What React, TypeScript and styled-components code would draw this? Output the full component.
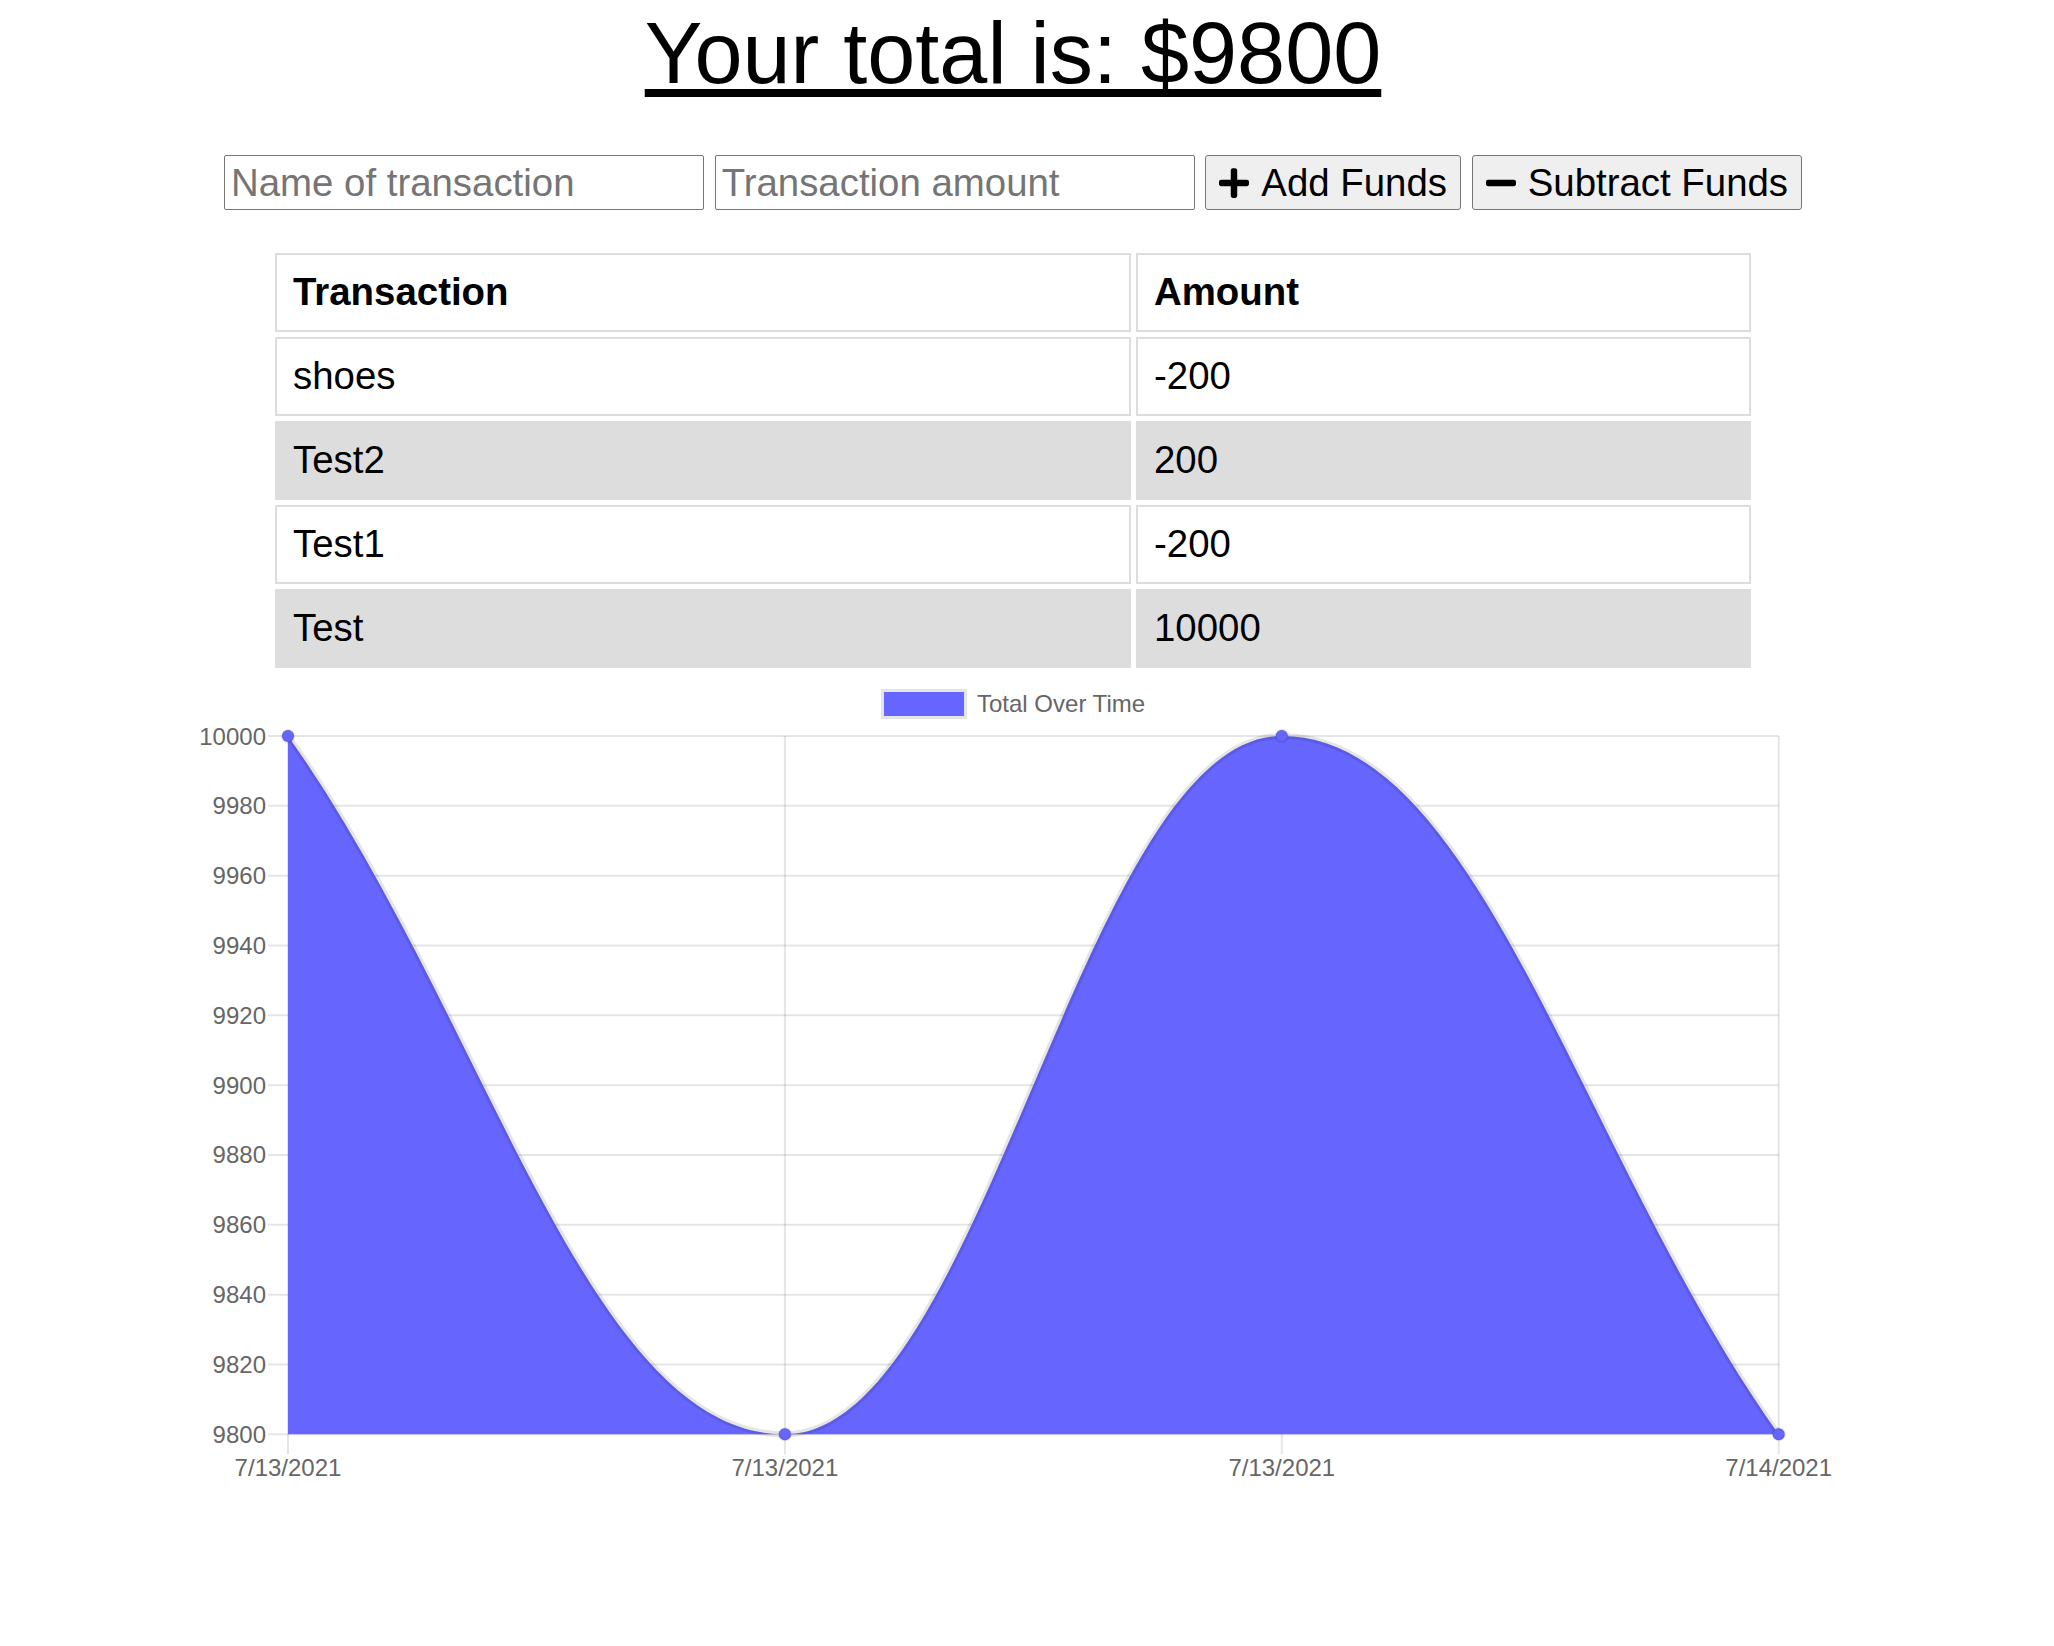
import React from "react";
import styled, { createGlobalStyle } from "styled-components";

const GlobalStyle = createGlobalStyle`
  html, body { margin: 0; padding: 0; background: #fff; }
  body { font-family: "Liberation Sans", Arial, Helvetica, sans-serif; color: #000; }
`;

const FONT = `"Liberation Sans", Arial, Helvetica, sans-serif`;

const Page = styled.main`
  display: flex;
  flex-direction: column;
  align-items: center;
  padding-right: 28px;
`;

const Title = styled.h1`
  margin: 0;
  font-size: 86.4px;
  line-height: 107px;
  font-weight: 400;
  text-decoration: underline;
  text-decoration-thickness: 8px;
  text-underline-offset: 5.5px;
`;

const Controls = styled.form`
  display: flex;
  gap: 10.7px;
  margin-top: 48px;
`;

const TextInput = styled.input`
  box-sizing: border-box;
  width: 480px;
  height: 55px;
  padding: 0 6px;
  font: 38.4px ${FONT};
  color: #000;
  background: #fff;
  border: 1px solid #767676;
  border-radius: 2px;
  &::placeholder { color: #757575; }
`;

const ActionButton = styled.button`
  box-sizing: border-box;
  height: 55px;
  display: inline-flex;
  align-items: center;
  gap: 12px;
  padding: 0 13px;
  font: 38.4px ${FONT};
  color: #000;
  background: #efefef;
  border: 1px solid #767676;
  border-radius: 3px;
`;

const Glyph = styled.svg`
  width: 30px;
  height: 34px;
  flex: none;
`;

const PlusIcon = () => (
  <Glyph viewBox="0 0 448 512" preserveAspectRatio="none">
    <path
      fill="currentColor"
      d="M416 208H272V64c0-17.670-14.330-32-32-32h-32c-17.670 0-32 14.330-32 32v144H32c-17.670 0-32 14.330-32 32v32c0 17.670 14.330 32 32 32h144v144c0 17.670 14.330 32 32 32h32c17.670 0 32-14.330 32-32V304h144c17.670 0 32-14.330 32-32v-32c0-17.670-14.330-32-32-32z"
    />
  </Glyph>
);

const MinusIcon = () => (
  <Glyph viewBox="0 0 448 512" preserveAspectRatio="none">
    <path
      fill="currentColor"
      d="M416 208H32c-17.670 0-32 14.330-32 32v32c0 17.670 14.330 32 32 32h384c17.670 0 32-14.330 32-32v-32c0-17.670-14.330-32-32-32z"
    />
  </Glyph>
);

const Ledger = styled.table`
  margin-top: 38px;
  width: 1486px;
  table-layout: fixed;
  border-collapse: separate;
  border-spacing: 5px;
  font-size: 38.4px;
`;

const HeadCell = styled.th<{ $wide?: boolean }>`
  box-sizing: border-box;
  width: ${(p) => (p.$wide ? "856px" : "auto")};
  padding: 15px 16px 17px;
  line-height: 43px;
  border: 2px solid #ddd;
  background: #fff;
  text-align: left;
  font-weight: 700;
`;

const Cell = styled.td<{ $shade?: boolean }>`
  padding: 15px 16px 17px;
  line-height: 43px;
  border: 2px solid #ddd;
  background: ${(p) => (p.$shade ? "#ddd" : "#fff")};
  text-align: left;
`;

const ChartFrame = styled.svg`
  display: block;
  width: 1680px;
  height: 848px;
  font-family: ${FONT};
`;

const transactions = [
  { name: "shoes", value: -200 },
  { name: "Test2", value: 200 },
  { name: "Test1", value: -200 },
  { name: "Test", value: 10000 },
];

const series = [10000, 9800, 10000, 9800];
const labels = ["7/13/2021", "7/13/2021", "7/13/2021", "7/14/2021"];

const PLOT = { left: 115, right: 1605.7, top: 63, bottom: 761.3 };
const MIN = 9800;
const MAX = 10000;
const STEP = 20;

type Pt = { x: number; y: number };

function spline(prev: Pt, cur: Pt, next: Pt, t: number) {
  const d01 = Math.hypot(cur.x - prev.x, cur.y - prev.y);
  const d12 = Math.hypot(next.x - cur.x, next.y - cur.y);
  let s01 = d01 / (d01 + d12);
  let s12 = d12 / (d01 + d12);
  if (isNaN(s01)) s01 = 0;
  if (isNaN(s12)) s12 = 0;
  const fa = t * s01;
  const fb = t * s12;
  return {
    p: { x: cur.x - fa * (next.x - prev.x), y: cur.y - fa * (next.y - prev.y) },
    n: { x: cur.x + fb * (next.x - prev.x), y: cur.y + fb * (next.y - prev.y) },
  };
}

function Chart() {
  const w = PLOT.right - PLOT.left;
  const h = PLOT.bottom - PLOT.top;
  const pts: Pt[] = series.map((v, i) => ({
    x: PLOT.left + (w * i) / (series.length - 1),
    y: PLOT.top + ((MAX - v) / (MAX - MIN)) * h,
  }));
  const cps = pts.map((pt, i) =>
    spline(pts[Math.max(0, i - 1)], pt, pts[Math.min(pts.length - 1, i + 1)], 0.4)
  );
  let line = `M${pts[0].x},${pts[0].y}`;
  for (let i = 1; i < pts.length; i++) {
    const a = cps[i - 1].n;
    const b = cps[i].p;
    line += ` C${a.x},${a.y} ${b.x},${b.y} ${pts[i].x},${pts[i].y}`;
  }
  const area = `${line} L${PLOT.right},${PLOT.bottom} L${PLOT.left},${PLOT.bottom} Z`;
  const ticks: number[] = [];
  for (let v = MAX; v >= MIN; v -= STEP) ticks.push(v);
  const grid = "rgba(0,0,0,0.1)";

  return (
    <ChartFrame viewBox="0 0 1680 848">
      <rect x={709.5} y={17.5} width={83} height={27} fill="none" stroke={grid} strokeWidth={3} />
      <rect x={711} y={19} width={80} height={24} fill="#6666ff" />
      <text x={804} y={39} fontSize={24} fill="#666">
        Total Over Time
      </text>

      {ticks.map((v, i) => {
        const y = PLOT.top + (h * i) / (ticks.length - 1);
        return (
          <g key={v}>
            <line x1={95} x2={PLOT.right} y1={y} y2={y} stroke={grid} strokeWidth={2} />
            <text x={93} y={y + 8.5} fontSize={24} fill="#666" textAnchor="end">
              {v}
            </text>
          </g>
        );
      })}

      {pts.map((p, i) => (
        <g key={i}>
          <line x1={p.x} x2={p.x} y1={PLOT.top} y2={PLOT.bottom + 20} stroke={grid} strokeWidth={2} />
          <text x={p.x} y={803} fontSize={24} fill="#666" textAnchor="middle">
            {labels[i]}
          </text>
        </g>
      ))}

      <path d={area} fill="#6666ff" />
      <path d={line} fill="none" stroke={grid} strokeWidth={6} />
      {pts.map((p, i) => (
        <circle key={i} cx={p.x} cy={p.y} r={6} fill="#6666ff" stroke={grid} strokeWidth={2} />
      ))}
    </ChartFrame>
  );
}

export default function App() {
  return (
    <>
      <GlobalStyle />
      <Page>
        <Title>Your total is: $9800</Title>
        <Controls onSubmit={(e) => e.preventDefault()}>
          <TextInput type="text" placeholder="Name of transaction" />
          <TextInput type="number" placeholder="Transaction amount" />
          <ActionButton type="button">
            <PlusIcon />
            Add Funds
          </ActionButton>
          <ActionButton type="button">
            <MinusIcon />
            Subtract Funds
          </ActionButton>
        </Controls>
        <Ledger>
          <thead>
            <tr>
              <HeadCell $wide>Transaction</HeadCell>
              <HeadCell>Amount</HeadCell>
            </tr>
          </thead>
          <tbody>
            {transactions.map((t, i) => (
              <tr key={t.name}>
                <Cell $shade={i % 2 === 1}>{t.name}</Cell>
                <Cell $shade={i % 2 === 1}>{t.value}</Cell>
              </tr>
            ))}
          </tbody>
        </Ledger>
        <Chart />
      </Page>
    </>
  );
}
